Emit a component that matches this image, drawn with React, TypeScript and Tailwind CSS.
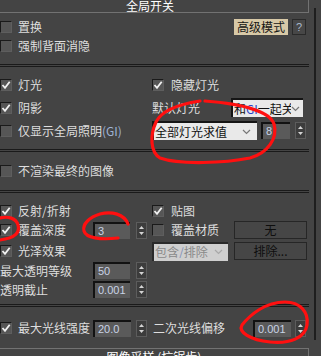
import React from "react";

function Cb({ checked }: { checked?: boolean }) {
  return (
    <div className="w-[12px] h-[12px] shrink-0 border-t border-l border-[#1a1a1a] border-b border-r border-b-[#5e5e5e] border-r-[#5e5e5e] bg-[#565656] flex items-center justify-center">
      {checked && (
        <svg width="10" height="10" viewBox="0 0 10 10">
          <path d="M1.5 5 L4 7.8 L8.7 1.8" stroke="#f2f2f2" strokeWidth="1.8" fill="none" />
        </svg>
      )}
    </div>
  );
}

function Spin() {
  return (
    <svg width="11" height="17" viewBox="0 0 11 17" className="shrink-0">
      <rect x="0.5" y="0.5" width="10" height="16" fill="#3c3c3c" stroke="#5c5c5c" />
      <path d="M3 7 L5.5 4 L8 7Z" fill="#d4d4d4" />
      <path d="M3 10 L5.5 13 L8 10Z" fill="#d4d4d4" />
    </svg>
  );
}

function Num({ v, className }: { v: string; className: string }) {
  return (
    <div
      className={
        "h-[17px] shrink-0 border-t-2 border-l-2 border-[#121212] bg-[#5a5a5a] flex items-center pl-[3px] text-[11px] text-[#c9d3e6] font-['Liberation_Sans',sans-serif] " +
        className
      }
    >
      {v}
    </div>
  );
}

function Chevron({ color }: { color: string }) {
  return (
    <svg width="9" height="6" viewBox="0 0 9 6" className="shrink-0">
      <path d="M1 1 L4.5 4.5 L8 1" stroke={color} strokeWidth="1.2" fill="none" />
    </svg>
  );
}

function Sep({ mt }: { mt: string }) {
  return <div className={"h-[3px] w-[309px] border-t border-b border-[#1a1a1a] " + mt} />;
}

function Btn({ label }: { label: string }) {
  return (
    <div className="w-[73px] h-[18px] shrink-0 border border-[#262626] bg-[#464646] flex items-center justify-center text-[#0e0e0e]">
      {label}
    </div>
  );
}

export default function App() {
  return (
    <div className="relative w-[321px] h-[356px] overflow-hidden bg-[#444444] text-[#dedede] text-[12px] leading-none font-['Noto_Sans_CJK_SC','Liberation_Sans',sans-serif]">
      <div className="flex">
        <div className="w-[309px] shrink-0 flex flex-col">
          {/* header */}
          <div className="h-[13px] border-b border-r border-[#727272] flex items-center justify-center pr-[8px] text-white">
            全局开关
          </div>

          {/* row 1 */}
          <div className="mt-[6px] h-[16px] flex items-center">
            <div className="w-[234px] flex items-center">
              <Cb />
              <span className="ml-[6px]">置换</span>
            </div>
            <div className="w-[54px] h-[16px] bg-[#d8c9a7] text-[#151515] flex items-center justify-center">高级模式</div>
            <div className="ml-[4px] w-[14px] h-[16px] border border-[#2a2a2a] bg-[#474747] text-[#a9b9cc] text-[11px] flex items-center justify-center font-['Liberation_Sans',sans-serif]">
              ?
            </div>
          </div>

          {/* row 2 */}
          <div className="mt-[4px] h-[14px] flex items-center">
            <Cb />
            <span className="ml-[6px]">强制背面消隐</span>
          </div>

          <Sep mt="mt-[11px]" />

          {/* lights */}
          <div className="mt-[12px] h-[12px] flex items-center">
            <div className="w-[152px] flex items-center">
              <Cb checked />
              <span className="ml-[6px]">灯光</span>
            </div>
            <Cb checked />
            <span className="ml-[7px]">隐藏灯光</span>
          </div>

          {/* shadows */}
          <div className="mt-[7px] h-[19px] flex items-center">
            <div className="w-[152px] flex items-center">
              <Cb checked />
              <span className="ml-[6px]">阴影</span>
            </div>
            <span className="w-[79px]">默认灯光</span>
            <div className="w-[72px] h-[19px] border-t-2 border-l-2 border-[#151515] bg-[#e9e9e9] flex items-center pl-[1px] pr-[3px] overflow-hidden">
              <span className="flex-1 overflow-hidden whitespace-nowrap text-[#111]">
                和<span className="text-[#2a45c8]">GI</span>一起关
              </span>
              <Chevron color="#777" />
            </div>
          </div>

          {/* GI */}
          <div className="mt-[4px] h-[19px] flex items-center">
            <div className="w-[152px] flex items-center">
              <Cb />
              <span className="ml-[6px] whitespace-nowrap">
                仅显示全局照明<span className="text-[#9fb3d4]">(GI)</span>
              </span>
            </div>
            <div className="w-[105px] h-[19px] border-t-2 border-l-2 border-[#151515] bg-[#e9e9e9] flex items-center pl-[1px] pr-[6px] text-[#111]">
              <span className="flex-1 whitespace-nowrap">全部灯光求值</span>
              <Chevron color="#777" />
            </div>
            <Num v="8" className="ml-[4px] w-[29px]" />
            <div className="ml-[5px]">
              <Spin />
            </div>
          </div>

          <Sep mt="mt-[9px]" />

          <div className="mt-[13px] h-[12px] flex items-center">
            <Cb />
            <span className="ml-[6px]">不渲染最终的图像</span>
          </div>

          <Sep mt="mt-[13px]" />

          {/* reflections */}
          <div className="mt-[12px] h-[12px] flex items-center">
            <div className="w-[152px] flex items-center">
              <Cb checked />
              <span className="ml-[6px]">反射/折射</span>
            </div>
            <Cb checked />
            <span className="ml-[7px]">贴图</span>
          </div>

          {/* override depth */}
          <div className="mt-[3px] h-[20px] flex items-center">
            <div className="w-[152px] flex items-center">
              <Cb checked />
              <span className="ml-[6px] w-[75px]">覆盖深度</span>
              <Num v="3" className="w-[37px]" />
              <div className="ml-[6px]">
                <Spin />
              </div>
            </div>
            <div className="w-[82px] flex items-center">
              <Cb />
              <span className="ml-[7px]">覆盖材质</span>
            </div>
            <Btn label="无" />
          </div>

          {/* glossy */}
          <div className="mt-[1px] h-[20px] flex items-center">
            <div className="w-[152px] flex items-center">
              <Cb checked />
              <span className="ml-[6px]">光泽效果</span>
            </div>
            <div className="w-[76px] h-[19px] border-t-2 border-l-2 border-[#2a2a2a] bg-[#cfcfcf] flex items-center pl-[1px] pr-[5px] text-[#8a8a8a] overflow-hidden">
              <span className="flex-1 whitespace-nowrap overflow-hidden">
                包含<span className="text-[#8090b8]">/</span>排除
              </span>
              <Chevron color="#a8a8a8" />
            </div>
            <div className="ml-[6px]">
              <Btn label="排除..." />
            </div>
          </div>

          {/* max transp */}
          <div className="mt-[1px] h-[17px] flex items-center">
            <span className="w-[93px]">最大透明等级</span>
            <Num v="50" className="w-[37px]" />
            <div className="ml-[6px]">
              <Spin />
            </div>
          </div>

          <div className="mt-[2px] h-[17px] flex items-center">
            <span className="w-[93px]">透明截止</span>
            <Num v="0.001" className="w-[37px]" />
            <div className="ml-[6px]">
              <Spin />
            </div>
          </div>

          <Sep mt="mt-[6px]" />

          {/* max ray intensity */}
          <div className="mt-[13px] h-[16px] flex items-center">
            <Cb checked />
            <span className="ml-[6px] w-[75px]">最大光线强度</span>
            <Num v="20.0" className="w-[38px]" />
            <div className="ml-[5px]">
              <Spin />
            </div>
            <span className="ml-[6px] w-[100px]">二次光线偏移</span>
            <Num v="0.001" className="w-[38px]" />
            <div className="ml-[4px]">
              <Spin />
            </div>
          </div>

          {/* next rollout */}
          <div className="mt-[12px] h-[12px] border-t border-r border-[#727272] flex justify-center pt-[2px] text-white whitespace-nowrap">
            图像采样 (抗锯齿)
          </div>
        </div>
        <div className="ml-[5px] mt-[8px] w-[2px] h-[332px] bg-[#1e1e1e]" />
      </div>

      {/* red annotations */}
      <svg className="absolute left-0 top-0 pointer-events-none" width="321" height="356" viewBox="0 0 321 356">
        <g stroke="#ff1010" strokeWidth="3.2" fill="none" strokeLinecap="round">
          <path d="M200 101 C180 104, 162 110, 156 122 C150 135, 150 152, 160 158 C180 165, 225 163, 250 158 C268 153, 278 138, 274 124 C270 112, 245 104, 205 101" />
          <path d="M128 224 C124 214, 112 211, 100 214 C90 217, 82 224, 84 231 C86 238, 100 240, 118 238" />
          <path d="M0 218 C8 216, 16 218, 18 225 C20 232, 16 238, 0 240" />
          <path d="M285 302 C265 302, 250 315, 242 325 C238 332, 250 340, 270 342 C290 344, 305 338, 307 325 C309 312, 300 302, 285 302" />
        </g>
      </svg>
    </div>
  );
}
